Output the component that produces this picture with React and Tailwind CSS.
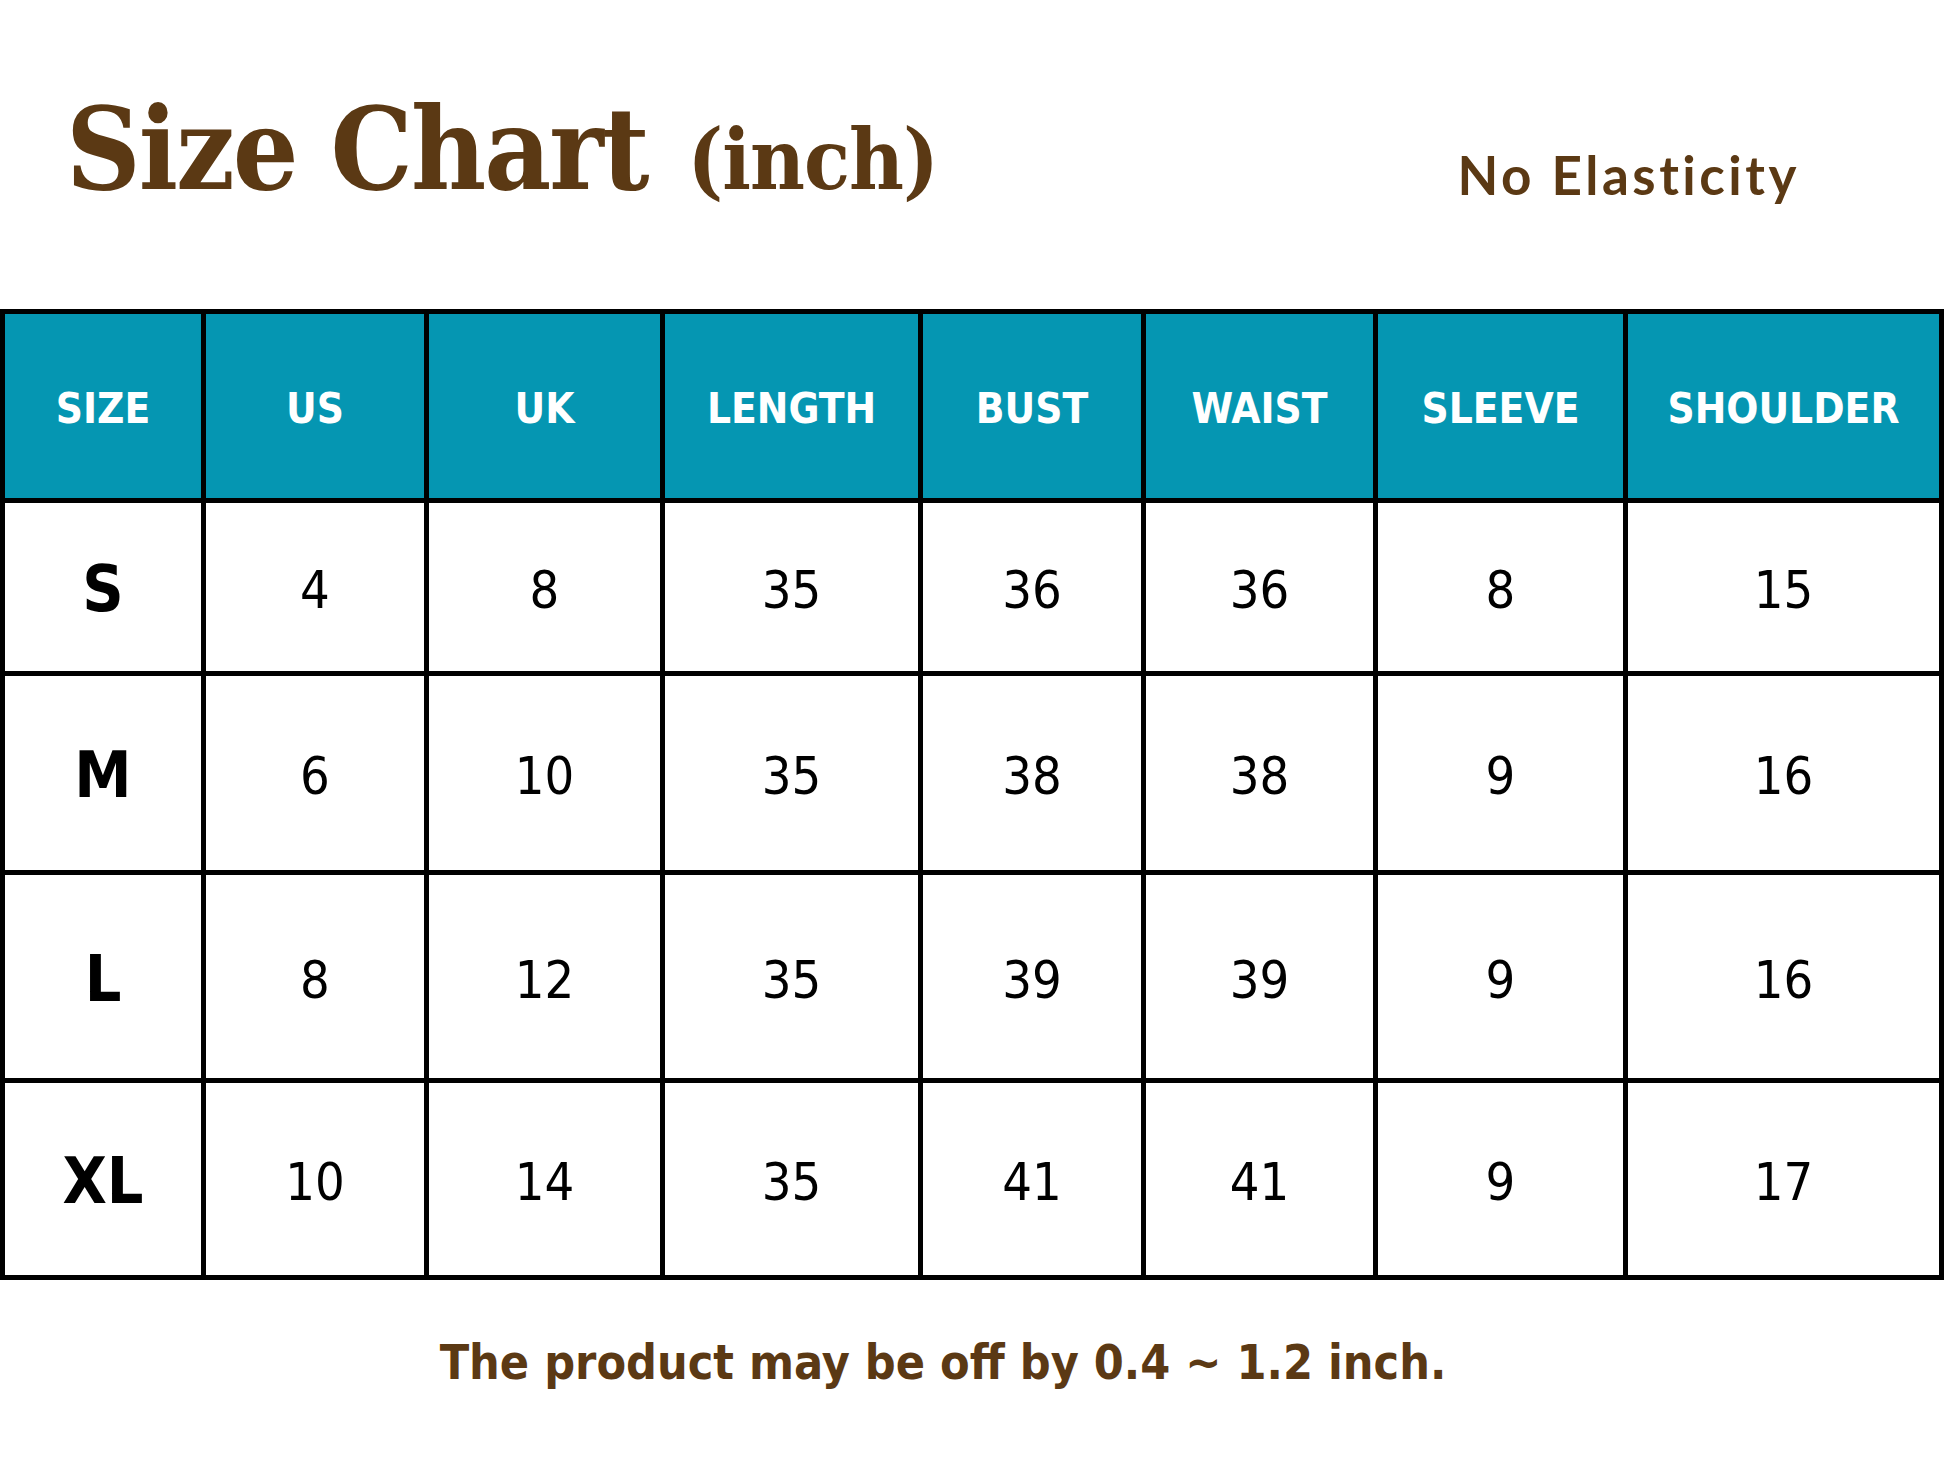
const headers = ["SIZE", "US", "UK", "LENGTH", "BUST", "WAIST", "SLEEVE", "SHOULDER"];

const rows = [
  { size: "S", h: "h-[168px]", values: ["4", "8", "35", "36", "36", "8", "15"] },
  { size: "M", h: "h-[194px]", values: ["6", "10", "35", "38", "38", "9", "16"] },
  { size: "L", h: "h-[203px]", values: ["8", "12", "35", "39", "39", "9", "16"] },
  { size: "XL", h: "h-[192px]", values: ["10", "14", "35", "41", "41", "9", "17"] },
];

const sans = "font-['DejaVu_Sans_Condensed','DejaVu_Sans',sans-serif] [font-stretch:condensed]";

export default function App() {
  return (
    <div className="w-[1946px] h-[1460px] bg-white overflow-hidden">
      {/* Title */}
      <div className="h-[309px] flex items-start">
        <div className="pl-[66px] pt-[91px] flex items-baseline text-[#5b3914] font-['DejaVu_Serif_Condensed','DejaVu_Serif',serif] [font-stretch:condensed] font-bold leading-none">
          <span className="text-[115px] tracking-[-2px]">Size Chart</span>
          <span className="text-[84px] ml-[40px] tracking-[-1px]">(inch)</span>
        </div>
        <div className="ml-auto mr-[146px] pt-[148px] text-[53px] leading-none font-['Lato',sans-serif] font-bold text-[#5b3914] tracking-[3.5px]">
          No Elasticity
        </div>
      </div>

      {/* Table */}
      <div className="w-[1944px] bg-black p-[5px] grid grid-cols-[196px_218px_231px_253px_218px_227px_245px_311px] gap-[5px]">
        {headers.map((h) => (
          <div
            key={h}
            className={`h-[184px] pt-[4px] bg-[#0596b2] flex items-center justify-center text-white font-bold text-[42px] ${sans}`}
          >
            {h}
          </div>
        ))}
        {rows.map((r) => (
          <div key={r.size} className="contents">
            <div className={`${r.h} pt-[4px] bg-white flex items-center justify-center text-black font-bold text-[64px] ${sans}`}>
              {r.size}
            </div>
            {r.values.map((v, i) => (
              <div
                key={i}
                className={`${r.h} pt-[6px] bg-white flex items-center justify-center text-black text-[52px] ${sans}`}
              >
                {v}
              </div>
            ))}
          </div>
        ))}
      </div>

      {/* Footer note */}
      <div className={`mt-[58px] pr-[60px] flex justify-center text-[#5b3914] font-bold text-[48px] leading-none ${sans}`}>
        The product may be off by 0.4 ~ 1.2 inch.
      </div>
    </div>
  );
}
